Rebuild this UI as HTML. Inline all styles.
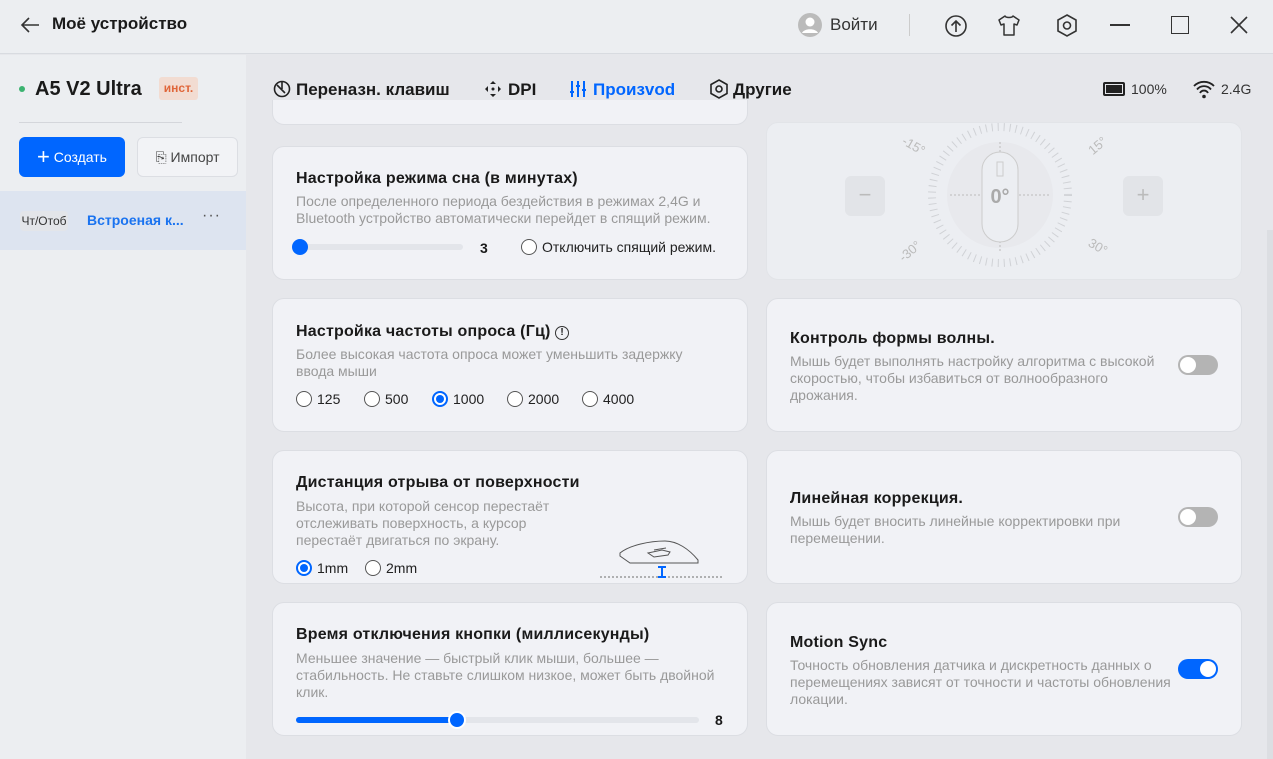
<!DOCTYPE html>
<html><head><meta charset="utf-8"><style>
*{box-sizing:border-box;margin:0;padding:0}
body{width:1273px;height:759px;overflow:hidden;background:#e6e7eb;font-family:"Liberation Sans","DejaVu Sans",sans-serif;color:#1a1a1a;position:relative}
.abs{position:absolute}
.side{left:0;top:55px;width:246px;height:704px;background:#eceef1}
.hdr{left:0;top:0;width:1273px;height:54px;background:#eceef1;border-bottom:1px solid #d8dbe0}
.card{position:absolute;background:#f1f2f6;border:1px solid #dcdee3;border-radius:12px}
.t{position:absolute;font-size:16px;letter-spacing:.2px;font-weight:bold;color:#1a1a1a}
.d{position:absolute;font-size:14px;color:#999;line-height:17px}
.radio{display:inline-block;width:16px;height:16px;border:1.5px solid #555;border-radius:50%;vertical-align:middle;margin-right:5px;position:relative;top:-1px;background:#fff}
.radio.on{border:2px solid #0066ff}
.radio.on::after{content:"";position:absolute;left:2px;top:2px;width:8px;height:8px;border-radius:50%;background:#0066ff}
.opt{position:absolute;font-size:14px;color:#222}
.tog{position:absolute;width:40px;height:20px;border-radius:10px;background:#b4b4b4}
.tog::after{content:"";position:absolute;left:2px;top:2px;width:16px;height:16px;border-radius:50%;background:#fff}
.tog.on{background:#0066ff}.tog.on::after{left:22px}
.tab{position:absolute;top:80px;font-size:17px;font-weight:bold}
</style></head><body>
<div class="abs hdr"></div>
<div class="abs side"></div>
<svg class="abs" style="left:20px;top:16px" width="20" height="18"><path d="M19 9H2M9 2L2 9l7 7" stroke="#333" stroke-width="1.6" fill="none"/></svg>
<div class="abs" style="left:52px;top:14px;font-size:17px;font-weight:bold">Моё устройство</div>
<svg class="abs" style="left:798px;top:13px" width="24" height="24"><circle cx="12" cy="12" r="12" fill="#bbb"/><circle cx="12" cy="9" r="4.5" fill="#fff"/><path d="M4 20c2-5 14-5 16 0" fill="#fff"/></svg>
<div class="abs" style="left:830px;top:15px;font-size:17px;color:#333">Войти</div>
<div class="abs" style="left:909px;top:14px;width:1px;height:22px;background:#ccc"></div>
<svg class="abs" style="left:944px;top:14px" width="24" height="24"><circle cx="12" cy="12" r="10" stroke="#333" stroke-width="1.6" fill="none"/><path d="M12 18V7M7.5 11.5L12 7l4.5 4.5" stroke="#333" stroke-width="1.6" fill="none"/></svg>
<svg class="abs" style="left:997px;top:13px" width="24" height="24"><path d="M8 3L2 7l2 5 3-1v11h10V11l3 1 2-5-6-4c-1 2-7 2-8 0z" stroke="#333" stroke-width="1.5" fill="none" stroke-linejoin="round"/></svg>
<svg class="abs" style="left:1055px;top:13px" width="24" height="26"><path d="M12 2l9 5v11l-9 5-9-5V7z" stroke="#333" stroke-width="1.6" fill="none"/><circle cx="12" cy="12.5" r="3.5" stroke="#333" stroke-width="1.6" fill="none"/></svg>
<div class="abs" style="left:1110px;top:24px;width:20px;height:2px;background:#333"></div>
<div class="abs" style="left:1171px;top:16px;width:18px;height:18px;border:1.8px solid #333"></div>
<svg class="abs" style="left:1230px;top:16px" width="18" height="18"><path d="M1 1l16 16M17 1L1 17" stroke="#333" stroke-width="1.6"/></svg>
<div class="abs" style="left:19px;top:86px;width:6px;height:6px;border-radius:50%;background:#3cb371"></div>
<div class="abs" style="left:35px;top:78px;font-size:20px;font-weight:bold">A5 V2 Ultra</div>
<div class="abs" style="left:159px;top:77px;width:39px;height:23px;background:#f2dcd2;border-radius:3px;color:#e0663a;font-size:12px;font-weight:bold;text-align:center;line-height:23px">инст.</div>
<div class="abs" style="left:19px;top:122px;width:163px;height:1px;background:#d4d6db"></div>
<div class="abs" style="left:19px;top:137px;width:106px;height:40px;background:#0066ff;border-radius:6px;color:#fff;font-size:14px;line-height:40px;text-align:center"><span style="font-size:22px;vertical-align:-2px">+</span> Создать</div>
<div class="abs" style="left:137px;top:137px;width:101px;height:40px;background:#f2f3f6;border:1px solid #dcdee3;border-radius:6px;color:#444;font-size:14px;line-height:38px;text-align:center">⎘ Импорт</div>
<div class="abs" style="left:0;top:191px;width:246px;height:59px;background:#dde4f0"></div>
<div class="abs" style="left:20px;top:211px;width:48px;height:20px;background:#e3e5e9;border-radius:4px;font-size:12px;line-height:20px;text-align:center;color:#333">Чт/Отоб</div>
<div class="abs" style="left:87px;top:212px;font-size:14px;font-weight:bold;color:#1a73f0">Встроеная к...</div>
<div class="abs" style="left:202px;top:207px;font-size:16px;color:#555;letter-spacing:1px">···</div>
<svg class="abs" style="left:273px;top:80px" width="18" height="18"><circle cx="9" cy="9" r="7.5" stroke="#222" stroke-width="1.6" fill="none"/><path d="M4 5l8 8M9 2v7" stroke="#222" stroke-width="1.6"/></svg>
<div class="tab" style="left:296px">Переназн. клавиш</div>
<svg class="abs" style="left:484px;top:80px" width="18" height="18"><path d="M9 1l3 3H6zM9 17l3-3H6zM1 9l3-3v6zM17 9l-3-3v6z" fill="#222"/><circle cx="9" cy="9" r="1.5" fill="#222"/></svg>
<div class="tab" style="left:508px">DPI</div>
<svg class="abs" style="left:569px;top:80px" width="18" height="18"><path d="M3 1v16M9 1v16M15 1v16" stroke="#0066ff" stroke-width="2"/><path d="M1 12h4M7 6h4M13 10h4" stroke="#0066ff" stroke-width="2"/></svg>
<div class="tab" style="left:593px;color:#0066ff">Произvod</div>
<div class="abs" style="left:568px;top:101px;width:108px;height:3px;background:#0066ff"></div>
<svg class="abs" style="left:709px;top:79px" width="20" height="20"><path d="M10 1l8 4.5v9L10 19l-8-4.5v-9z" stroke="#222" stroke-width="1.6" fill="none"/><circle cx="10" cy="10" r="3" stroke="#222" stroke-width="1.6" fill="none"/></svg>
<div class="tab" style="left:733px">Другие</div>
<div class="abs" style="left:1103px;top:82px;width:22px;height:14px;border:2px solid #222;border-radius:2px"><div style="margin:1px;height:8px;background:#222"></div></div>
<div class="abs" style="left:1131px;top:81px;font-size:14px;color:#333">100%</div>
<svg class="abs" style="left:1192px;top:79px" width="24" height="20"><path d="M2 7a14 14 0 0 1 20 0M5 10.5a9 9 0 0 1 14 0M8 14a4.5 4.5 0 0 1 8 0" stroke="#222" stroke-width="1.8" fill="none"/><circle cx="12" cy="17.5" r="1.8" fill="#222"/></svg>
<div class="abs" style="left:1221px;top:81px;font-size:14px;color:#333">2.4G</div>
<div class="card" style="left:272px;top:100px;width:476px;height:25px;border-top:none;border-radius:0 0 12px 12px"></div>

<div class="card" style="left:272px;top:146px;width:476px;height:134px"></div>
<div class="t" style="left:296px;top:170px">Настройка режима сна (в минутах)</div>
<div class="d" style="left:296px;top:193px;width:420px">После определенного периода бездействия в режимах 2,4G и Bluetooth устройство автоматически перейдет в спящий режим.</div>
<div class="abs" style="left:297px;top:244px;width:166px;height:6px;background:#e3e5ea;border-radius:3px"></div>
<div class="abs" style="left:292px;top:239px;width:16px;height:16px;background:#0066ff;border-radius:50%"></div>
<div class="abs" style="left:480px;top:240px;font-size:14px;font-weight:bold">3</div>
<div class="opt" style="left:521px;top:239px"><span class="radio"></span>Отключить спящий режим.</div>

<div class="card" style="left:272px;top:298px;width:476px;height:134px"></div>
<div class="t" style="left:296px;top:323px">Настройка частоты опроса (Гц) <span style="display:inline-block;width:14px;height:14px;border:1.3px solid #333;border-radius:50%;font-size:10px;text-align:center;line-height:12px;vertical-align:1px">!</span></div>
<div class="d" style="left:296px;top:346px;width:420px">Более высокая частота опроса может уменьшить задержку ввода мыши</div>
<div class="opt" style="left:296px;top:391px"><span class="radio"></span>125</div>
<div class="opt" style="left:364px;top:391px"><span class="radio"></span>500</div>
<div class="opt" style="left:432px;top:391px"><span class="radio on"></span>1000</div>
<div class="opt" style="left:507px;top:391px"><span class="radio"></span>2000</div>
<div class="opt" style="left:582px;top:391px"><span class="radio"></span>4000</div>

<div class="card" style="left:272px;top:450px;width:476px;height:134px"></div>
<div class="t" style="left:296px;top:474px">Дистанция отрыва от поверхности</div>
<div class="d" style="left:296px;top:498px;width:270px">Высота, при которой сенсор перестаёт отслеживать поверхность, а курсор перестаёт двигаться по экрану.</div>
<div class="opt" style="left:296px;top:560px"><span class="radio on"></span>1mm</div>
<div class="opt" style="left:365px;top:560px"><span class="radio"></span>2mm</div>
<svg class="abs" style="left:598px;top:538px" width="126" height="42"><path d="M22 15c10-8 30-12 45-12 12 0 24 8 33 19l0 3H32l-10-7z" stroke="#555" stroke-width="1" fill="none"/><path d="M50 15l14-3 8 2-2 3-14 2zM56 12l12-2" stroke="#555" stroke-width="1" fill="none"/><path d="M2 39h122" stroke="#888" stroke-width="1.2" stroke-dasharray="2 2"/><path d="M64 29v10M60 29h8M60 39h8" stroke="#0066ff" stroke-width="2"/></svg>

<div class="card" style="left:272px;top:602px;width:476px;height:134px"></div>
<div class="t" style="left:296px;top:626px">Время отключения кнопки (миллисекунды)</div>
<div class="d" style="left:296px;top:650px;width:430px">Меньшее значение — быстрый клик мыши, большее — стабильность. Не ставьте слишком низкое, может быть двойной клик.</div>
<div class="abs" style="left:296px;top:717px;width:403px;height:6px;background:#e3e5ea;border-radius:3px"></div>
<div class="abs" style="left:296px;top:717px;width:161px;height:6px;background:#0066ff;border-radius:3px"></div>
<div class="abs" style="left:448px;top:711px;width:18px;height:18px;background:#0066ff;border:2px solid #fff;border-radius:50%"></div>
<div class="abs" style="left:715px;top:712px;font-size:14px;font-weight:bold">8</div>

<div class="card" style="left:766px;top:122px;width:476px;height:158px;background:#eceef2;border-color:#e2e4e8"></div>
<div class="abs" style="left:845px;top:176px;width:40px;height:40px;background:#e2e4e8;border-radius:6px;color:#bbb;text-align:center;line-height:38px;font-size:22px">−</div>
<div class="abs" style="left:1123px;top:176px;width:40px;height:40px;background:#e2e4e8;border-radius:6px;color:#bbb;text-align:center;line-height:38px;font-size:22px">+</div>
<svg class="abs" style="left:890px;top:122px" width="230" height="150"><circle cx="110" cy="73" r="68" fill="none" stroke="#d0d2d6" stroke-width="8" stroke-dasharray="1 5"/><circle cx="110" cy="73" r="53" fill="#e8e9ed"/><path d="M60 73h35M125 73h35M110 20v20M110 115v15" stroke="#bbb" stroke-dasharray="2 2"/><rect x="92" y="30" width="36" height="90" rx="18" fill="#eceef2" stroke="#ccc"/><rect x="107" y="40" width="6" height="14" stroke="#ccc" fill="none"/><text x="110" y="81" text-anchor="middle" font-size="20" font-weight="bold" fill="#aaa" font-family="Liberation Sans">0°</text><text x="12" y="26" font-size="13" fill="#bbb" font-family="Liberation Sans" transform="rotate(30 20 22)">-15°</text><text x="198" y="30" font-size="13" fill="#bbb" font-family="Liberation Sans" transform="rotate(-40 205 25)">15°</text><text x="8" y="135" font-size="13" fill="#bbb" font-family="Liberation Sans" transform="rotate(-40 18 130)">-30°</text><text x="196" y="128" font-size="13" fill="#bbb" font-family="Liberation Sans" transform="rotate(30 205 128)">30°</text></svg>

<div class="card" style="left:766px;top:298px;width:476px;height:134px"></div>
<div class="t" style="left:790px;top:330px">Контроль формы волны.</div>
<div class="d" style="left:790px;top:353px;width:380px">Мышь будет выполнять настройку алгоритма с высокой скоростью, чтобы избавиться от волнообразного дрожания.</div>
<div class="tog" style="left:1178px;top:355px"></div>

<div class="card" style="left:766px;top:450px;width:476px;height:134px"></div>
<div class="t" style="left:790px;top:490px">Линейная коррекция.</div>
<div class="d" style="left:790px;top:513px;width:380px">Мышь будет вносить линейные корректировки при перемещении.</div>
<div class="tog" style="left:1178px;top:507px"></div>

<div class="card" style="left:766px;top:602px;width:476px;height:134px"></div>
<div class="t" style="left:790px;top:634px">Motion Sync</div>
<div class="d" style="left:790px;top:657px;width:390px">Точность обновления датчика и дискретность данных о перемещениях зависят от точности и частоты обновления локации.</div>
<div class="tog on" style="left:1178px;top:659px"></div>
<div class="abs" style="left:1267px;top:230px;width:6px;height:529px;background:#dcdee2"></div>
</body></html>
